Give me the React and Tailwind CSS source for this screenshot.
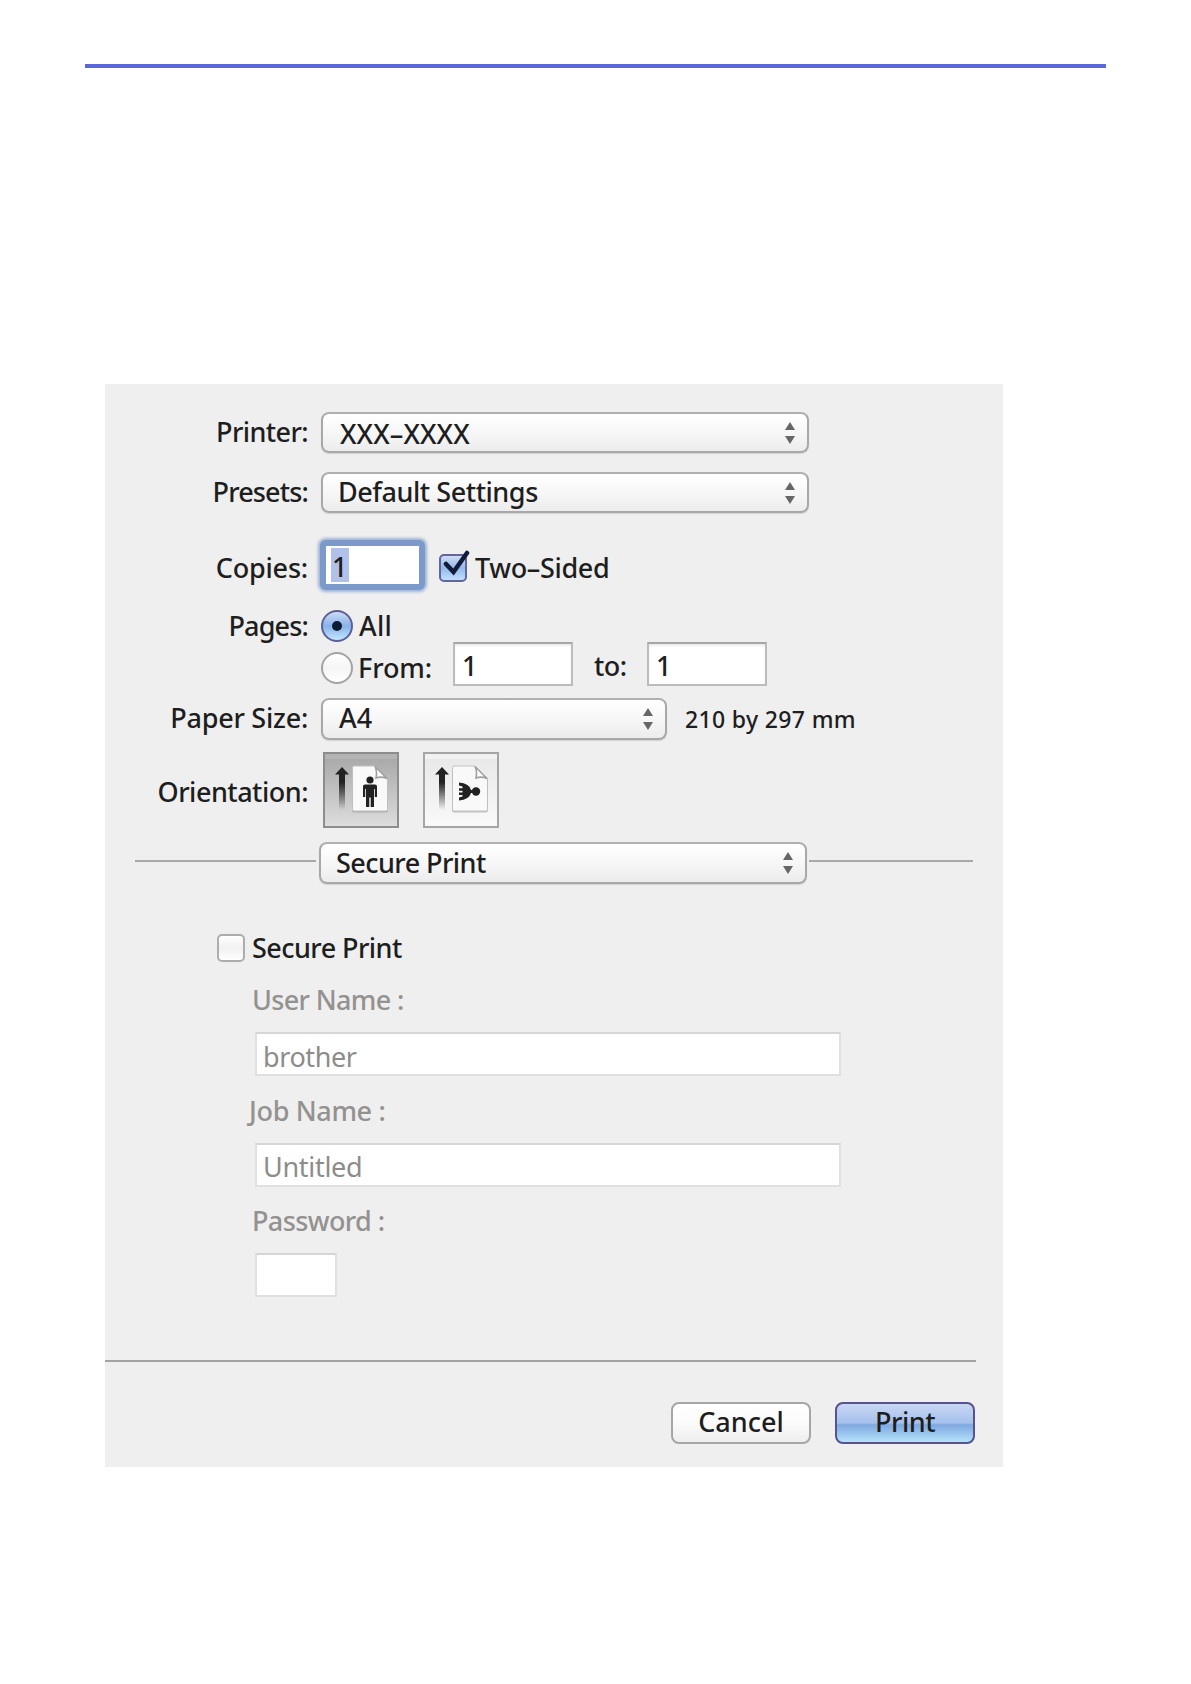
import React, { useState } from 'react';

const Label = ({ children, className = '' }) => (
    <div className={`w-[203px] shrink-0 whitespace-nowrap text-right ${className}`}>{children}</div>
);

// Up / down arrows at the right end of a popup button
const Arrows = () => (
    <svg width="10" height="22" viewBox="0 0 10 22" className="shrink-0 fill-[#666666]">
        <path d="M5 0 L10 8 H0 Z" />
        <path d="M0 14 H10 L5 22 Z" />
    </svg>
);

const Popup = ({ children, className = '' }) => (
    <button
        className={`flex shrink-0 items-center justify-between rounded-[8px] border-2 border-[#a8a8a8] border-t-[#b0b0b0] bg-linear-to-b from-white via-[#f7f7f7] to-[#ececec] text-left shadow-[0_1px_1px_rgba(0,0,0,0.12)] ${className}`}
    >
        {children}
        <Arrows />
    </button>
);

const NumberField = ({ value, className = '' }) => (
    <div className={`flex h-[44px] w-[120px] shrink-0 items-center border-2 border-[#bcbcbc] border-t-[#a6a6a6] bg-white pl-[7px] pt-1 shadow-[inset_0_2px_2px_rgba(0,0,0,0.08)] ${className}`}>
        {value}
    </div>
);

const Radio = ({ checked, onClick }) => (
    <button
        onClick={onClick}
        className={`flex size-8 shrink-0 items-center justify-center rounded-full border-2 ${
            checked
                ? 'border-[#5f5f97] bg-linear-to-b from-[#cbdcf5] via-[#88b2e9] to-[#c4e6fd]'
                : 'border-[#a3a3a3] bg-linear-to-b from-white via-[#f5f5f5] to-white'
        }`}
    >
        {checked && <span className="size-[10px] rounded-full bg-[#0c1a35]" />}
    </button>
);

const PageSheet = ({ id, children }) => (
    <svg width="72" height="72" viewBox="0 0 72 72">
        <defs>
            <linearGradient id={id} x1="0" y1="0" x2="0" y2="1">
                <stop offset="0.35" stopColor="#222" />
                <stop offset="1" stopColor="#222" stopOpacity="0" />
            </linearGradient>
        </defs>
        <path d="M17 13 L24 20.5 H20 V56 H14 V20.5 H10 Z" fill={`url(#${id})`} />
        <path d="M29 14 H49.5 L63 25 V56.5 Q63 58.5 61 58.5 H29 Q27 58.5 27 56.5 V14.5 Z" fill="#666" opacity="0.35" />
        <path d="M29 12 H49.5 L62.5 25 V55.5 Q62.5 57 61 57 H29 Q27.5 57 27.5 55.5 V13.5 Q27.5 12 29 12 Z" fill="#f9f9f9" stroke="#c0c0c0" />
        <path d="M50 12.5 L62 24.5 Q56 22 51 24 Q52.5 18 50 12.5 Z" fill="#fff" stroke="#a0a0a0" strokeWidth="1.6" />
        {children}
    </svg>
);

const DisabledField = ({ label, value, labelClass, inputClass }) => (
    <div className="h-[110.5px]">
        <div className={`whitespace-pre font-medium leading-[36px] text-[#949290] ${labelClass}`}>{label}</div>
        <div className={`mt-[14px] flex h-[44px] items-center border-2 border-[#e0e0e0] border-t-[#d6d6d6] bg-white pl-[6px] pt-[5px] font-normal text-[#8e8c8a] ${inputClass}`}>
            {value}
        </div>
    </div>
);

export default function App() {
    const [range, setRange] = useState('all');
    const [landscape, setLandscape] = useState(false);

    return (
        <div className="h-[1684px] w-[1191px] overflow-hidden bg-white pt-16">
            <div className="ml-[85px] h-1 w-[1021px] bg-[#5b68d9]" />

            <div className="ml-[105px] mt-[316px] flex h-[1083px] w-[898px] flex-col bg-[#efefef] pt-7 font-['Noto_Sans','Open_Sans',sans-serif] text-[27px] font-medium leading-[36px] text-[#1e1e1e]">
                <div className="flex h-[41px] items-center">
                    <Label className="pb-px tracking-[-0.6px]">Printer:</Label>
                    <Popup className="ml-[13px] h-[41px] w-[488px] pl-[17px] pr-3">
                        <span className="pt-0.5 tracking-[0.1px]">XXX–XXXX</span>
                    </Popup>
                </div>

                <div className="mt-[19px] flex h-[41px] items-center">
                    <Label className="pb-px tracking-[-0.85px]">Presets:</Label>
                    <Popup className="ml-[13px] h-[41px] w-[488px] pl-[15px] pr-3">
                        <span className="pb-px tracking-[-0.45px]">Default Settings</span>
                    </Popup>
                </div>

                <div className="mt-[25px] flex h-[54px] items-center">
                    <Label className="pt-[6px] tracking-[-0.2px]">Copies:</Label>
                    <div className="ml-[12px] flex h-[50px] w-[105px] items-center rounded-[6px] border-[6px] border-[#7b9aca] bg-white pl-[5px] shadow-[0_0_3px_2px_rgba(123,154,202,0.7)]">
                        <span className="h-[34px] w-[18px] bg-[#b1c1e9] pl-px leading-[38px]">1</span>
                    </div>
                    <div className="ml-[14px] flex items-center">
                        <div className="relative mt-[5px] size-7 rounded-[5px] border-2 border-[#62669a] bg-linear-to-b from-[#cddcf5] via-[#94b9ec] to-[#bfe0fb]">
                            <svg width="32" height="34" viewBox="0 0 32 34" className="absolute -left-0.5 -top-[6px]">
                                <path d="M7 14 L14.5 22 L28 3" fill="none" stroke="#101c38" strokeWidth="4.5" strokeLinecap="round" />
                            </svg>
                        </div>
                        <span className="ml-2 pt-[6px] tracking-[-0.35px]">Two–Sided</span>
                    </div>
                </div>

                <div className="mt-[18px] flex h-8 items-center">
                    <Label className="tracking-[-0.85px]">Pages:</Label>
                    <div className="ml-[13px] flex items-center gap-[6px]">
                        <Radio checked={range === 'all'} onClick={() => setRange('all')} />
                        <span className="tracking-[0.3px]">All</span>
                    </div>
                </div>

                <div className="flex h-[44px] items-center pl-[216px]">
                    <div className="flex w-[132px] items-center gap-[5px] pt-[7px]">
                        <Radio checked={range === 'from'} onClick={() => setRange('from')} />
                        <span className="tracking-[-0.1px]">From:</span>
                    </div>
                    <NumberField value="1" />
                    <span className="w-[74px] pl-[21px] pt-1 tracking-[-0.5px]">to:</span>
                    <NumberField value="1" />
                </div>

                <div className="mt-3 flex h-[42px] items-center">
                    <Label className="pb-0.5 tracking-[-0.25px]">Paper Size:</Label>
                    <Popup className="ml-[13px] h-[42px] w-[346px] pl-4 pr-[12px]">
                        <span className="pb-0.5">A4</span>
                    </Popup>
                    <span className="ml-[18px] text-[23px] tracking-[0.35px]">210 by 297 mm</span>
                </div>

                <div className="mt-[12px] flex h-[76px] items-center">
                    <Label className="pt-1 tracking-[-0.5px]">Orientation:</Label>
                    <button
                        onClick={() => setLandscape(false)}
                        className="ml-[15px] size-[76px] border-2 border-[#8d8d8d] bg-linear-to-b from-[#a6a6a6] to-[#dddddd] shadow-[inset_0_5px_0_rgba(255,255,255,0.15)]"
                    >
                        <PageSheet id="arrow-portrait">
                            <g fill="#222">
                                <circle cx="45" cy="26" r="3.6" />
                                <path d="M40 30.5 H50 Q52 30.5 52 32.5 V43 H49.8 V35 H49 V53 H45.7 V43.5 H44.3 V53 H41 V35 H40.2 V43 H38 V32.5 Q38 30.5 40 30.5 Z" />
                            </g>
                        </PageSheet>
                    </button>
                    <button
                        onClick={() => setLandscape(true)}
                        aria-pressed={landscape}
                        className="ml-6 size-[76px] border-2 border-[#a6a6a6] bg-linear-to-b from-[#e8e8e8] to-[#f9f9f9] shadow-[inset_0_5px_0_rgba(255,255,255,0.4)]"
                    >
                        <PageSheet id="arrow-landscape">
                            <g fill="#222">
                                <circle cx="51" cy="37.5" r="4.2" />
                                <path d="M34 28.5 Q44 29 46 36 H48 V39 H46 Q44 46 34 46.5 V43.4 L37.5 42.4 V41 H34 V38.4 H37.5 V36.8 H34 V34.2 H37.5 V32.6 L34 31.6 Z" />
                            </g>
                        </PageSheet>
                    </button>
                </div>

                <div className="mt-[14px] flex h-[42px] items-center pl-[30px]">
                    <div className="mb-[5px] h-0.5 w-[181px] bg-[#a9a9a9]" />
                    <Popup className="ml-[3px] h-[42px] w-[488px] pl-[15px] pr-3">
                        <span className="pb-px tracking-[-0.55px]">Secure Print</span>
                    </Popup>
                    <div className="mb-[5px] ml-[2px] h-0.5 w-[164px] bg-[#a9a9a9]" />
                </div>

                <div className="mt-[50px] flex h-7 items-center pl-[112px]">
                    <div className="size-7 rounded-[5px] border-2 border-[#adadad] bg-linear-to-b from-white via-[#f1f1f1] to-white" />
                    <span className="ml-[7px] tracking-[-0.55px]">Secure Print</span>
                </div>

                <div className="mt-[20px] pl-[150px]">
                    <DisabledField label="User Name :" value="brother" labelClass="-ml-[3px] tracking-[-0.65px]" inputClass="w-[586px] tracking-[-0.4px]" />
                    <DisabledField label="Job Name :" value="Untitled" labelClass="-ml-[6px] tracking-[-0.35px]" inputClass="w-[586px] tracking-[-0.3px]" />
                    <DisabledField label="Password :" value="" labelClass="-ml-[3px] tracking-[-0.6px]" inputClass="w-[82px]" />
                </div>

                <div className="mt-[46.5px] h-0.5 w-[871px] bg-[#a3a3a3]" />

                <div className="mt-10 flex justify-end gap-6 pr-7">
                    <button className="h-[42px] w-[140px] rounded-[8px] border-2 border-[#a6a6a6] bg-linear-to-b from-white via-[#fbfbfb] to-[#eeeeee] pb-1">
                        Cancel
                    </button>
                    <button className="h-[42px] w-[140px] rounded-[8px] border-2 border-[#575390] bg-[linear-gradient(to_bottom,#c9d7f3_0%,#a5c1ec_50%,#7fa8e0_55%,#b5e2fa_100%)] pb-1 tracking-[-0.5px]">
                        Print
                    </button>
                </div>
            </div>
        </div>
    );
}
